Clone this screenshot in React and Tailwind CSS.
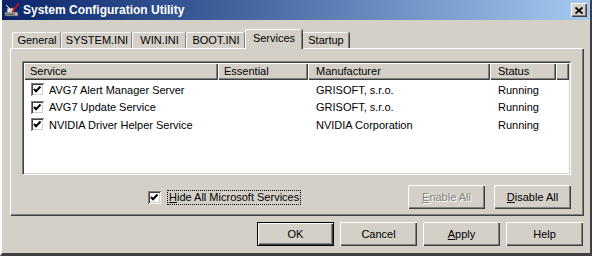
import React from "react";

const font = { fontFamily: '"Liberation Sans", Arial, sans-serif' };

const raised =
  "bg-[#d4d0c8] shadow-[inset_1px_1px_#ffffff,inset_-1px_-1px_#404040,inset_-2px_-2px_#808080]";

const Check = ({ className = "" }) => (
  <span
    className={`w-[13px] h-[13px] bg-white flex items-center justify-center shadow-[inset_1px_1px_#808080,inset_-1px_-1px_#ffffff,inset_2px_2px_#404040,inset_-2px_-2px_#d4d0c8] ${className}`}
  >
    <svg width="9" height="9" viewBox="0 0 9 9">
      <path d="M1 4 L3 6.2 L7.5 1.5" stroke="#000" strokeWidth="2" fill="none" />
    </svg>
  </span>
);

const Button = ({ children, disabled, def }) => (
  <div
    className={`w-[77px] h-[24px] flex items-center justify-center text-[11px] ${
      def
        ? "bg-[#d4d0c8] border border-black shadow-[inset_1px_1px_#ffffff,inset_-1px_-1px_#404040,inset_-2px_-2px_#808080]"
        : raised
    } ${disabled ? "text-[#808080] [text-shadow:1px_1px_#ffffff]" : "text-black"}`}
  >
    {children}
  </div>
);

const tabs = [
  { label: "General", w: "w-[49px]" },
  { label: "SYSTEM.INI", w: "w-[71px]" },
  { label: "WIN.INI", w: "w-[54px]" },
  { label: "BOOT.INI", w: "w-[59px]" },
  { label: "Services", w: "w-[57px]", active: true },
  { label: "Startup", w: "w-[47px]" },
];

const rows = [
  ["AVG7 Alert Manager Server", "GRISOFT, s.r.o.", "Running"],
  ["AVG7 Update Service", "GRISOFT, s.r.o.", "Running"],
  ["NVIDIA Driver Helper Service", "NVIDIA Corporation", "Running"],
];

const AppIcon = () => (
  <svg width="17" height="16" viewBox="0 0 17 16">
    <rect x="1" y="10" width="13" height="4" fill="#c0c0c0" stroke="#404040" strokeWidth="0.8" />
    <rect x="3" y="6" width="7" height="5" fill="#e0e0e0" stroke="#404040" strokeWidth="0.8" />
    <rect x="2" y="12" width="9" height="1" fill="#606060" />
    <path d="M8 10 L15 1" stroke="#d01010" strokeWidth="1.6" />
    <path d="M2 3 L6 7" stroke="#ffffff" strokeWidth="1" />
  </svg>
);

export default function App() {
  return (
    <div
      style={font}
      className="w-[592px] h-[256px] bg-[#d4d0c8] border-l-2 border-l-white border-r-2 border-r-[#404040] border-b-[3px] border-b-[#404040] flex flex-col text-black overflow-hidden"
    >
      {/* Title bar */}
      <div className="h-[20px] flex items-center bg-gradient-to-r from-[#0a246a] to-[#a6caf0] pl-[2px] pr-[3px]">
        <AppIcon />
        <span className="ml-[2px] text-white font-bold text-[12px]">System Configuration Utility</span>
        <div className="flex-1" />
        <div className={`w-[16px] h-[14px] flex items-center justify-center ${raised}`}>
          <svg width="8" height="7" viewBox="0 0 8 7">
            <path d="M0.5 0.5 L7.5 6.5 M7.5 0.5 L0.5 6.5" stroke="#000" strokeWidth="1.8" />
          </svg>
        </div>
      </div>

      {/* Tabs */}
      <div className="h-[28px] flex items-end pl-[10px]">
        {tabs.map((t) => (
          <div
            key={t.label}
            className={`${t.w} flex items-center justify-center text-[11px] bg-[#d4d0c8] border-t border-l border-white rounded-t-[2px] shadow-[inset_-1px_0_#808080,1px_0_#404040] ${
              t.active ? "h-[20px] -mb-[1px] relative z-10 pb-[3px]" : "h-[16px]"
            }`}
          >
            {t.label}
          </div>
        ))}
      </div>

      {/* Panel */}
      <div className="ml-[8px] w-[573px] h-[167px] border-t border-l border-white shadow-[inset_-1px_-1px_#808080,1px_1px_#404040] pt-[12px] px-[11px]">
        {/* List view */}
        <div className="w-[549px] h-[114px] bg-white p-[2px] shadow-[inset_1px_1px_#808080,inset_-1px_-1px_#ffffff,inset_2px_2px_#404040,inset_-2px_-2px_#d4d0c8]">
          <div className="flex h-[17px] text-[11px]">
            <div className={`w-[194px] flex items-center pl-[6px] ${raised}`}>Service</div>
            <div className={`w-[90px] flex items-center pl-[6px] ${raised}`}>Essential</div>
            <div className={`w-[182px] flex items-center pl-[8px] ${raised}`}>Manufacturer</div>
            <div className={`w-[66px] flex items-center pl-[8px] ${raised}`}>Status</div>
            <div className={`flex-1 ${raised}`} />
          </div>
          <div className="pt-[1px]">
            {rows.map((r) => (
              <div key={r[0]} className="flex h-[17.5px] items-center text-[11px]">
                <div className="w-[194px] flex items-center pl-[7px]">
                  <Check />
                  <span className="ml-[5px]">{r[0]}</span>
                </div>
                <div className="w-[90px]" />
                <div className="w-[182px] pl-[8px]">{r[1]}</div>
                <div className="w-[66px] pl-[8px]">{r[2]}</div>
              </div>
            ))}
          </div>
        </div>

        {/* Hide + buttons */}
        <div className="flex items-center mt-[10px] w-[549px]">
          <Check className="ml-[126px]" />
          <span className="ml-[6px] text-[11px] px-[1px] border border-dotted border-black leading-[13px]">
            <span className="underline">H</span>ide All Microsoft Services
          </span>
          <div className="flex-1" />
          <div className="flex gap-[9px]">
            <Button disabled>
              <span className="underline">E</span>nable All
            </Button>
            <Button>
              <span className="underline">D</span>isable All
            </Button>
          </div>
        </div>
      </div>

      {/* Dialog buttons */}
      <div className="flex justify-end gap-[6px] mt-[7px] pr-[7px]">
        <Button def>OK</Button>
        <Button>Cancel</Button>
        <Button>
          <span className="underline">A</span>pply
        </Button>
        <Button>Help</Button>
      </div>
    </div>
  );
}
